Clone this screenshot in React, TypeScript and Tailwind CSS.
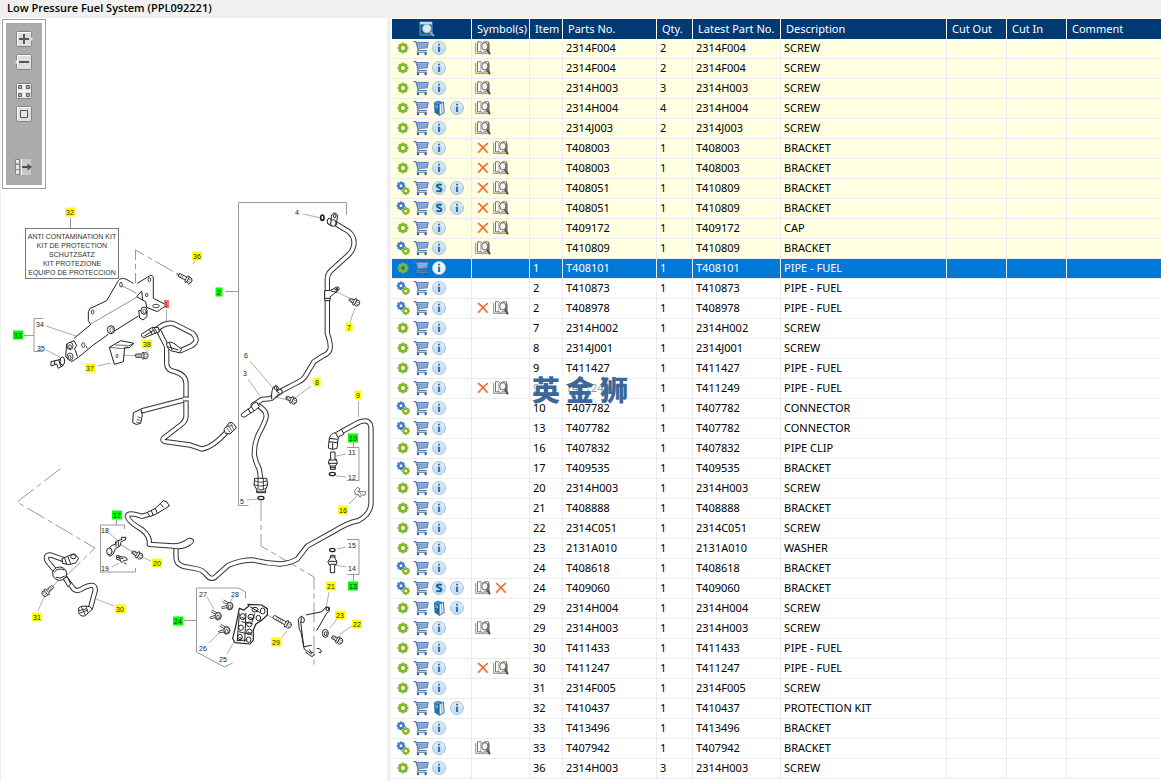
import React from 'react';

type Part = {
  gear: 'one' | 'two';
  extra?: 'S' | 'book';
  symbols: string;
  item: string;
  partNo: string;
  qty: string;
  latest: string;
  description: string;
  selected?: boolean;
};

// gear | extra | symbols (x = cross, b = book) | item | part no. | qty | latest | description
const source = `1||b||2314F004|2|2314F004|SCREW
1||b||2314F004|2|2314F004|SCREW
1||b||2314H003|3|2314H003|SCREW
1|book|b||2314H004|4|2314H004|SCREW
1||b||2314J003|2|2314J003|SCREW
1||xb||T408003|1|T408003|BRACKET
1||xb||T408003|1|T408003|BRACKET
2|S|xb||T408051|1|T410809|BRACKET
2|S|xb||T408051|1|T410809|BRACKET
1||xb||T409172|1|T409172|CAP
2||b||T410809|1|T410809|BRACKET
1|||1|T408101|1|T408101|PIPE - FUEL
2|||2|T410873|1|T410873|PIPE - FUEL
2||xb|2|T408978|1|T408978|PIPE - FUEL
1|||7|2314H002|1|2314H002|SCREW
1|||8|2314J001|1|2314J001|SCREW
1|||9|T411427|1|T411427|PIPE - FUEL
1||xb|9|T411249|1|T411249|PIPE - FUEL
2|||10|T407782|1|T407782|CONNECTOR
2|||13|T407782|1|T407782|CONNECTOR
1|||16|T407832|1|T407832|PIPE CLIP
2|||17|T409535|1|T409535|BRACKET
1|||20|2314H003|1|2314H003|SCREW
1|||21|T408888|1|T408888|BRACKET
1|||22|2314C051|1|2314C051|SCREW
1|||23|2131A010|1|2131A010|WASHER
2|||24|T408618|1|T408618|BRACKET
2|S|bx|24|T409060|1|T409060|BRACKET
1|book||29|2314H004|1|2314H004|SCREW
1||b|29|2314H003|1|2314H003|SCREW
1|||30|T411433|1|T411433|PIPE - FUEL
1||xb|30|T411247|1|T411247|PIPE - FUEL
1|||31|2314F005|1|2314F005|SCREW
1|book||32|T410437|1|T410437|PROTECTION KIT
2|||33|T413496|1|T413496|BRACKET
2||b|33|T407942|1|T407942|BRACKET
1|||36|2314H003|3|2314H003|SCREW`;

const parts: Part[] = source.split('\n').map((line) => {
  const [gear, extra, symbols, item, partNo, qty, latest, description] = line.split('|');
  return {
    gear: gear === '2' ? 'two' : 'one',
    extra: (extra || undefined) as Part['extra'],
    symbols,
    item,
    partNo,
    qty,
    latest,
    description,
    selected: item === '1',
  };
});

/* ---------- icons ---------- */

const TEETH = [0, 45, 90, 135];

function Cog({ cx, cy, r, color }: { cx: number; cy: number; r: number; color: string }) {
  return (
    <g>
      {TEETH.map((a) => (
        <rect
          key={a}
          x={cx - r * 0.26}
          y={cy - r}
          width={r * 0.52}
          height={r * 2}
          fill={color}
          transform={`rotate(${a} ${cx} ${cy})`}
        />
      ))}
      <circle cx={cx} cy={cy} r={r * 0.55} fill="none" stroke={color} strokeWidth={r * 0.42} />
    </g>
  );
}

function GearIcon({ kind, selected }: { kind: 'one' | 'two'; selected?: boolean }) {
  const hole = selected ? '#0078d7' : '#fffff4';
  return (
    <svg width="16" height="16" viewBox="0 0 16 16" aria-hidden="true">
      {kind === 'one' ? (
        <>
          <Cog cx={8} cy={8} r={5.4} color="#83b52e" />
          <circle cx="8" cy="8" r="1.9" fill={hole} />
        </>
      ) : (
        <>
          <Cog cx={6} cy={5.8} r={4.3} color="#4079d0" />
          <circle cx="6" cy="5.8" r="1.4" fill={hole} />
          <Cog cx={10.8} cy={11} r={4} color="#8cb52c" />
          <circle cx="10.8" cy="11" r="1.3" fill={hole} />
        </>
      )}
    </svg>
  );
}

function CartIcon() {
  return (
    <svg width="16" height="16" viewBox="0 0 16 16" aria-hidden="true">
      <path d="M.5 1.6h2.3l2.8 9h8.3" fill="none" stroke="#55789f" strokeWidth="1.2" />
      <path d="M3.6 2.5h11.7l-1.1 5.3-9 .7z" fill="#b4cdec" stroke="#5680b5" strokeWidth="1" />
      <path
        d="M4 4.3h11M4.6 6.2h10M6 2.5l.8 5.8M8 2.5l.4 5.6M10 2.5v5.5M12 2.5l-.3 5.3M13.8 2.5l-.7 5.2"
        stroke="#5f8bc4"
        strokeWidth=".6"
      />
      <path d="M5.4 8.5 4 12.4h10" fill="none" stroke="#6d88a8" strokeWidth="1" />
      <circle cx="5" cy="14" r="1.2" fill="#2d5c94" />
      <circle cx="12.6" cy="14" r="1.2" fill="#2d5c94" />
    </svg>
  );
}

function InfoIcon({ selected }: { selected?: boolean }) {
  return (
    <svg width="16" height="16" viewBox="0 0 16 16" aria-hidden="true">
      <circle cx="8" cy="8" r="6.6" fill={selected ? '#e9f2fa' : '#c9dff0'} stroke="#9fbfdd" strokeWidth=".8" />
      <path d="M2.4 7a5.7 5.7 0 0 1 11.2 0z" fill="#fff" opacity=".35" />
      <path d="M7 3.8h2.1v1.7H7zM6.7 6.7h2.4v5.2H7V7.6h-.3z" fill="#3b6fa8" />
    </svg>
  );
}

function SuperIcon() {
  return (
    <svg width="16" height="16" viewBox="0 0 16 16" aria-hidden="true">
      <circle cx="8" cy="8" r="6.6" fill="#c4e0f2" stroke="#a4c6e0" strokeWidth=".8" />
      <path
        d="M10.6 5.3C9.6 4.3 6 4 5.9 6c0 2 4.5 1.6 4.5 3.8 0 2-3.6 1.8-5 .7"
        fill="none"
        stroke="#14649b"
        strokeWidth="2"
      />
    </svg>
  );
}

function ManualIcon() {
  return (
    <svg width="16" height="16" viewBox="0 0 16 16" aria-hidden="true">
      <path d="M3 2.2 8.2 4.2v11.4L3.6 12.8z" fill="#1a6fae" />
      <path d="M3 2.2 7 .5l5.4 1.7-4.2 2z" fill="#3c8fc8" />
      <path d="M8.2 4.2 12.4 2.2l.8 10.4-5 3z" fill="#eef5fa" stroke="#1d6196" strokeWidth=".9" />
      <path d="M4.200 5.200l2.800 1.100M4.300 6.800l2.700 1.100" stroke="#a9d2ec" strokeWidth=".8" />
      <path d="M10.400 3.500l.6 10.200" stroke="#4d8bb8" strokeWidth=".7" />
    </svg>
  );
}

function CrossIcon() {
  return (
    <svg width="16" height="16" viewBox="0 0 16 16" role="img" aria-label="Not available">
      <path d="M3.2 3.2c3 2.4 6.5 6 9.4 9.6M12.8 3.2C9.5 5.8 6 9.3 3.2 12.8" stroke="#f26a2c" strokeWidth="1.7" fill="none" />
    </svg>
  );
}

function BookIcon() {
  return (
    <svg width="16" height="16" viewBox="0 0 16 16" role="img" aria-label="Notes">
      <path d="M2.500 1.800h3.300L7.500 3.400 9.200 1.800h4.300v10H9l-1.500 1-1.500-1H2.500z" fill="#fffef8" stroke="#66645c" strokeWidth=".9" />
      <path d="M.7 3v10.400h6l.8.800.8-.8h6V3.500" fill="none" stroke="#85837a" strokeWidth=".9" />
      <path d="M5.800 3v9" stroke="#85837a" strokeWidth=".7" />
      <ellipse cx="9.800" cy="6.300" rx="3.100" ry="3.700" fill="#f4f4f1" stroke="#4f4f4c" strokeWidth=".9" />
      <path d="m11.600 9.300 3.500 5" stroke="#4f4d49" strokeWidth="1.800" />
    </svg>
  );
}

function HeaderSearchIcon() {
  return (
    <svg width="16" height="16" viewBox="0 0 16 16" role="img" aria-label="Actions">
      <path d="M1 1h12v13H1z" fill="#17538b" stroke="#5fa3cf" strokeWidth="1" />
      <path d="M1 1h12v2.4H1z" fill="#b9dcf0" />
      <circle cx="7.8" cy="7.6" r="4.3" fill="#dbe7ee" stroke="#a3b5c2" strokeWidth="1" />
      <path d="m11 11 4 4" stroke="#8fa9bb" strokeWidth="2" />
    </svg>
  );
}

/* ---------- viewer toolbar ---------- */

function Key({ children }: { children?: React.ReactNode }) {
  return (
    <svg width="18" height="16" viewBox="0 0 18 16" aria-hidden="true">
      <rect x="1.5" y=".5" width="15" height="15" rx="1" fill="#dedede" stroke="#858585" />
      <path d="M2.5 14V1.5h13" fill="none" stroke="#fff" />
      {children}
    </svg>
  );
}

const tools = [
  {
    label: 'Zoom in',
    gap: 'mt-2',
    icon: (
      <Key>
        <path d="M16 6l2 2-2 2z" fill="#e6e6e6" />
        <path d="M9 3v10M4 8h10" stroke="#555" strokeWidth="2" />
      </Key>
    ),
  },
  {
    label: 'Zoom out',
    gap: 'mt-[7px]',
    icon: (
      <Key>
        <path d="M2 6 0 8l2 2z" fill="#e6e6e6" />
        <path d="M4 8h10" stroke="#555" strokeWidth="2" />
      </Key>
    ),
  },
  {
    label: 'Fit to window',
    gap: 'mt-[13px]',
    icon: (
      <Key>
        <path d="M9 1v14M2 8h14" stroke="#f4f4f4" strokeWidth="2" />
        <path d="M3.5 2.5h3v3h-3zM11.5 2.5h3v3h-3zM3.5 10.5h3v3h-3zM11.5 10.5h3v3h-3z" fill="#aaa" stroke="#666" />
      </Key>
    ),
  },
  {
    label: 'Actual size',
    gap: 'mt-[7px]',
    icon: (
      <Key>
        <path d="M5.5 4.5h7v7h-7z" fill="#e4e4e4" stroke="#555" />
      </Key>
    ),
  },
  {
    label: 'Hide parts list',
    gap: 'mt-[37px]',
    icon: (
      <svg width="18" height="16" viewBox="0 0 18 16" aria-hidden="true">
        <path d="M6 0h10v16H6z" fill="#c9c9c9" />
        <path d="M6.5 0v16" stroke="#fff" />
        <path d="M.5.500h4v4.500h-4zM.5 5.500h4v5h-4zM.5 10.500h4v5h-4z" fill="#e8e8e8" stroke="#858585" />
        <path d="M7 8h7" stroke="#505050" strokeWidth="2" />
        <path d="m12.5 4.5 4.5 3.5-4.5 3.5z" fill="#505050" />
      </svg>
    ),
  },
];

function Toolbar() {
  return (
    <div className="m-px w-[44px] self-start border border-[#a0a0a0] bg-white p-[3px]">
      <div className="flex h-[162px] flex-col items-center bg-[#ababab]" role="toolbar" aria-label="Drawing tools">
        {tools.map((tool) => (
          <button key={tool.label} type="button" aria-label={tool.label} className={`${tool.gap} block h-4 shrink-0`}>
            {tool.icon}
          </button>
        ))}
      </div>
    </div>
  );
}

/* ---------- exploded drawing ---------- */

type Callout = [number, number, string];

const yellow: Callout[] = [
  [70, 212, '32'], [197, 256, '36'], [147, 344, '38'], [90, 368, '37'], [349, 327, '7'],
  [317, 382, '8'], [358, 395, '9'], [343, 510, '16'], [157, 563, '20'], [120, 609, '30'],
  [37, 617, '31'], [331, 586, '21'], [340, 615, '23'], [357, 624, '22'], [276, 642, '29'],
];
const green: Callout[] = [
  [18, 335, '33'], [219, 292, '2'], [353, 438, '10'], [117, 515, '17'], [178, 621, '24'], [353, 586, '13'],
];
const plain: Callout[] = [
  [40, 324, '34'], [41, 348, '35'], [297, 212, '4'], [246, 355, '6'], [245, 373, '3'], [242, 501, '5'],
  [352, 452, '11'], [352, 477, '12'], [352, 545, '15'], [352, 568, '14'], [105, 530, '18'],
  [105, 568, '19'], [203, 594, '27'], [235, 594, '28'], [203, 648, '26'], [223, 659, '25'],
];

function Callouts({ list, fill }: { list: Callout[]; fill?: string }) {
  return (
    <>
      {list.map(([x, y, label]) => {
        const w = label.length > 1 ? 10 : 7;
        return (
          <g key={label}>
            {fill && <rect x={x - w / 2} y={y - 4.5} width={w} height={9} fill={fill} />}
            <text x={x} y={y + 3} textAnchor="middle">
              {label}
            </text>
          </g>
        );
      })}
    </>
  );
}

function Pipe({ d }: { d: string }) {
  return (
    <>
      <path d={d} fill="none" stroke="#333" strokeWidth="16" strokeLinecap="round" strokeLinejoin="round" />
      <path d={d} fill="none" stroke="#fff" strokeWidth="10" strokeLinecap="round" strokeLinejoin="round" />
    </>
  );
}

function Bolt({ x, y, length, angle }: { x: number; y: number; length: number; angle: number }) {
  return (
    <g transform={`translate(${x} ${y}) rotate(${angle})`} fill="#fff" stroke="#222" strokeWidth="2.5">
      <rect x={-length} y="-5" width={length} height="10" rx="3" />
      <path d={length > 30 ? 'M-30-5v10M-24-5v10M-18-5v10M-36-5v10' : 'M-22-5v10M-17-5v10M-12-5v10'} strokeWidth="1.5" />
      <ellipse cx="-3" cy="0" rx="4" ry="11" />
      <path d="M0-8 7-9 12-4v8l-5 6-7-2z" />
      <path d="M2-3h9M2 4h9" strokeWidth="1.5" />
    </g>
  );
}

function Clip({ x, y }: { x: number; y: number }) {
  return (
    <g transform={`translate(${x} ${y})`} fill="#fff" stroke="#333" strokeWidth="2.5">
      <path d="M-22 4-4-2M-20 8l16-3M-14-18 4-8M-17-13 0-3" />
      <ellipse cx="5" cy="0" rx="9" ry="11" />
      <ellipse cx="4" cy="3" rx="4" ry="6" />
      <path d="M-4-6C4-14 12-8 13 2l-6 9M-6 6l9 7" fill="none" />
    </g>
  );
}

const kitLines = ['ANTI CONTAMINATION KIT', 'KIT DE PROTECTION', 'SCHUTZSATZ', 'KIT PROTEZIONE', 'EQUIPO DE PROTECCION'];

function Drawing() {
  return (
    <svg
      width="386"
      height="763"
      viewBox="1 18 386 763"
      className="block font-['Liberation_Sans',sans-serif] text-[7px]"
      role="img"
      aria-label="Low pressure fuel system exploded drawing"
    >
      {/* frames, leaders and centre lines */}
      <g fill="none" stroke="#999" strokeWidth="1">
        <path d="M346.500 214.500v-12h-108v303h10M225 291.500h13M70.500 218v10M24 335.500h10M43 318.500h-9v33h9" />
        <path d="M347 447.500h12v33h-12M353.500 443v4M347 539.500h12v35h-12M353.500 575v6" />
        <path d="M124.500 529v-4h-24v47h35v-4M116.500 520v5M184 620.500h12M245.500 598v-6l-7-4h-42v64l28 15 8-4" />
        <path
          d="M303 214l18 4M202 252l-9 12M46 326l30 10M46 350l14 7M97 366l14-3M147 355v-6M166.500 310v12M337 292l16 8M350 322l5-14M250 361l23 27M248 379l12 17M311 386l-16 12M358.500 401v16M247 500l10-1M346 454l-10 2M346 477l-10-1M346 547l-9 2M346 567l-10-2M349 504l9-9M151 561l-12-5M109 533l8 7M112 567l7-4M114 606l-18-7M38 611l7-16M45 595l13-14M207 597l7 12M233 597l-5 9M209 643l11-11M227 654l7-12M282 637l5-6M329 592l-3 17M337 619l-7 9M352 626l-12 8M121 355.500h14M272 396l19 5"
          strokeWidth=".8"
        />
        <path d="M135.500 293v-43l42 24M60 469l-43 33 78 46-32 31" strokeDasharray="20 4 5 4" />
        <path d="M261 501v45l53 31v90M263 613l14 7M118 543l18 11" strokeDasharray="20 4 5 4" />
      </g>

      {/* contamination kit note */}
      <rect x="25.5" y="228.5" width="93" height="50" fill="#fff" stroke="#777" />
      <g fill="#333">
        {kitLines.map((line, i) => (
          <text key={line} x={72} y={239 + i * 9} textAnchor="middle">
            {line}
          </text>
        ))}
      </g>

      {/* mounting bracket */}
      <g transform="translate(0 190) scale(.33333)" fill="#fff" stroke="#222" strokeWidth="3" strokeLinejoin="round">
        <path
          d="M222 445 272 404 265 392V365Q268 352 282 350L320 332 355 272Q362 262 377 267L400 280 412 280 450 257Q459 254 460 264L461 325 502 347 472 365 440 352 437 370 345 422 280 465 235 502 215 515 197 500 200 460Z"
          stroke="none"
        />
        <path d="M222 445 272 404 265 392V365Q268 352 282 350L320 332 355 272Q362 262 377 267L400 280M412 280 450 257Q459 254 460 264V325L500 345 472 365 440 352 437 335 410 320 425 303 428 330" fill="none" />
        <path d="M440 368 420 376M415 378 345 422M325 433 280 465 235 502 215 515 197 500 200 462 222 452 230 466 222 480M226 480 232 500" fill="none" />
        <path d="M272 402 410 322M362 285 410 310" strokeWidth="1.5" />
        <path d="M416 362h25v18l-12 10-10-6z" />
        <ellipse cx="432" cy="362" rx="9" ry="11" /><ellipse cx="433" cy="364" rx="4" ry="6" strokeWidth="2" />
        <ellipse cx="333" cy="419" rx="11" ry="12" /><ellipse cx="335" cy="420" rx="5" ry="8" strokeWidth="2" />
        <g strokeWidth="2.500">
          <ellipse cx="363" cy="284" rx="4" ry="7" /><ellipse cx="448" cy="269" rx="4" ry="6" />
          <ellipse cx="278" cy="366" rx="4" ry="6" /><ellipse cx="440" cy="315" rx="4" ry="5" />
          <ellipse cx="468" cy="348" rx="10" ry="5" /><ellipse cx="250" cy="465" rx="5" ry="7" />
          <path d="m258 468 4 8" />
          <ellipse cx="210" cy="468" rx="9" ry="11" /><ellipse cx="210" cy="470" rx="4" ry="6" />
          <ellipse cx="210" cy="500" rx="9" ry="11" /><ellipse cx="209" cy="502" rx="4" ry="6" />
        </g>
        {/* clip 35 */}
        <path d="M153 515 183 508 190 526 175 535 170 522 153 528zM164 512v13M176 509l6 20" />
        <ellipse cx="187" cy="513" rx="7" ry="12" />
        {/* angle bracket 37 */}
        <path d="M328 472 362 452 402 460 388 473 374 474 370 515 343 523z" />
        <path d="M328 472 368 476 402 460M345 465 382 466" fill="none" strokeWidth="2" />
        <ellipse cx="351" cy="498" rx="3" ry="5" strokeWidth="2" />
        <Bolt x={432} y={497} length={26} angle={0} />
        <Bolt x={564} y={269} length={32} angle={28} />
      </g>

      {/* pipe 1 */}
      <g transform="translate(100 300) scale(.33333)" fill="#fff" stroke="#222" strokeWidth="3">
        <Pipe d="M258 298 128 332" />
        <Pipe d="M175 90 200 140V190Q200 212 225 215 258 225 258 250V350Q256 364 246 372L190 415Q186 423 196 425L270 435 305 447Q340 442 385 390" />
        <Pipe d="M168 90Q200 62 225 73L278 100Q300 122 275 137L242 152 215 142" />
        <path d="M250 290h17v16h-17z" stroke="none" />
        <path d="M249 291h18M249 303h18" />
        <path d="M124 103 155 83 175 82 178 96 160 102 133 113Q124 112 124 103zM148 88l8 14M156 84l10 16M133 108l30-18M163 84l8 14" />
        <path d="M199 130Q210 122 222 130L245 148 238 158 212 152Q200 146 199 130zM208 128l8 22M203 140l32 10" />
        <path d="M100 338 122 328 127 345 122 370Q108 378 98 368z" />
        <path d="M112 350l11 4M110 358l12 4M108 366l12 3" strokeWidth="2" />
        <path d="M372 388 388 368Q400 364 409 384L390 402 376 400z" />
        <path d="M384 374l14 22M392 370l10 20M379 382l12 16M380 380l18-4" strokeWidth="2" />
      </g>

      {/* pipe 2 and fittings */}
      <g transform="translate(190 190) scale(.33333)" fill="#fff" stroke="#222" strokeWidth="3">
        <Pipe d="M432 98 475 124Q493 138 492 160 491 180 475 195L422 243Q412 253 412 268V430Q425 468 419 481 414 492 398 498L372 515 345 560Q338 570 325 576L275 602 250 618" />
        <path d="M404 302Q420 305 440 292L446 300 421 320 420 332H404z" />
        <path d="M404 325h16M423 303l18 4" />
        <ellipse cx="441" cy="296" rx="7" ry="5" /><ellipse cx="441" cy="297" rx="3" ry="2" />
        <path d="M424 88Q422 69 435 69 446 72 441 88L439 105 424 108 412 100 413 88z" />
        <ellipse cx="434" cy="78" rx="4" ry="5" />
        <ellipse cx="418" cy="94" rx="6" ry="9" /><ellipse cx="430" cy="99" rx="8" ry="10" />
        <ellipse cx="397" cy="83" rx="5" ry="8" strokeWidth="5" />
        <Bolt x={497} y={337} length={18} angle={25} />
      </g>

      <g transform="translate(200 370) scale(.33333)" fill="#fff" stroke="#222" strokeWidth="3">
        {/* pipe 9 */}
        <Pipe d="M430 182 476 157Q513 142 513 178V402Q510 434 475 452 440 459 400 485L322 528 292 567Q270 580 240 582 200 580 160 570 120 570 85 586L50 617Q35 634 20 615 8 600-8 597L-50 589Q-72 583-72 562V540" />
        <Pipe d="M-150 432-175 439Q-215 425-218 438-216 455-175 478-148 500-152 523L-80 528Q-54 528-32 511-20 512-32 519-52 534-80 528" />
        <path d="M-158 427-134 415-110 392Q-98 391-92 408L-128 430-150 440zM-146 422l6 15M-134 415l6 15M-118 402l8 10" />
        <path d="M388 205Q392 190 407 188L424 178 432 192 415 201 411 235Q398 242 385 234zM406 188l8 14M388 205l24 3M386 215l25 3M398 218v20" />
        {/* pipe 3 */}
        <Pipe d="M170 105Q202 120 198 142 196 155 176 192 162 220 163 255 166 275 178 298L182 328" />
        <Pipe d="M240 65 212 86 186 88 160 105" />
        <path d="M124 132 152 112 160 100 170 96 178 110 166 120 134 141Q122 142 124 132zM144 116l8 13M152 108l10 14" />
        <path d="M215 88Q213 55 225 47 235 46 236 56L228 62 238 70 216 92" />
        <ellipse cx="227" cy="54" rx="4" ry="5" />
        <Bolt x={278} y={91} length={20} angle={25} />
        <path d="M164 325H200L203 345 197 358V368H170V358L162 345z" />
        <path d="M164 333q18 8 37 0M163 344q19 9 39 0M170 356q14 7 27 0M174 325v30M190 325v34M170 364h27" strokeWidth="2.500" />
        <ellipse cx="183" cy="384" rx="9" ry="5" strokeWidth="4" />
        {/* connectors 10 and 13 */}
        <path d="M392 246h13v22h4l3 12-6 8v10h-15v-10l-6-8 3-12h4zM388 270h21M386 280h25M391 288h14M391 293h14" />
        <ellipse cx="397" cy="312" rx="9" ry="5" strokeWidth="4" />
        <ellipse cx="397" cy="540" rx="8" ry="5" strokeWidth="4" />
        <path d="M392 556h13v10l6 8-3 10-4 2v22h-13v-22l-4-2-3-10 6-8zM391 561h14M387 574h23M389 583h20" />
        <path d="M464 362 472 352 480 356 476 364 498 366 494 376 484 374 480 382 474 372 466 374zM472 362l12 10" stroke="#777" />
      </g>

      {/* lower left pipe 30 and bracket 17 */}
      <g transform="translate(0 480) scale(.33333)" fill="#fff" stroke="#222" strokeWidth="3">
        <Pipe d="M200 242 152 225Q132 224 143 245L170 278" />
        <Pipe d="M192 290 222 328Q235 336 248 325 285 305 286 330L272 382" />
        <path d="M186 236 222 221 236 234 228 248 208 254 188 250zM194 235l6 18M204 230l8 22" />
        <ellipse cx="220" cy="230" rx="8" ry="6" />
        <ellipse cx="179" cy="281" rx="21" ry="20" />
        <path d="M163 276q12-14 30-6M168 292q14 6 26-4M190 296l14 24 8-8-10-22z" />
        <path d="M236 384Q246 375 270 380L277 388 254 408Q240 410 236 398z" />
        <path d="M244 380l12 26M236 392l24-6M238 400l26-10M258 378l6 20" strokeWidth="2.500" />
        <Bolt x={138} y={338} length={28} angle={138} />
        <path d="M322 222Q326 196 345 193L348 184 366 178 364 172 378 172 376 180 364 184 360 198 346 206 340 222 330 229zM322 210l16 6M348 186v14M355 184v14" />
        <ellipse cx="328" cy="214" rx="8" ry="10" />
        <path d="M350 226l14 4 14 2 4 8-12 2-4 6-8-8-8-2zM350 232l20 4M356 226l6 18M372 248l8 4" stroke="#333" />
        <Bolt x={416} y={226} length={20} angle={28} />
      </g>

      {/* bracket 24, bolts and plate 21 */}
      <g transform="translate(180 500) scale(.33333)" fill="#fff" stroke="#222" strokeWidth="3">
        <path
          d="M178 325 192 330 206 318 204 313 245 315 262 326V345L246 360 228 372 220 390V420L210 432 165 428 158 415 168 375z"
          strokeWidth="3.500"
        />
        <g strokeWidth="3">
          <ellipse cx="225" cy="329" rx="9" ry="7" /><ellipse cx="248" cy="333" rx="7" ry="9" />
          <ellipse cx="188" cy="350" rx="8" ry="9" /><ellipse cx="213" cy="351" rx="9" ry="8" />
          <ellipse cx="235" cy="354" rx="7" ry="8" /><ellipse cx="183" cy="383" rx="7" ry="8" />
          <ellipse cx="208" cy="373" rx="8" ry="7" /><ellipse cx="208" cy="395" rx="8" ry="8" />
          <ellipse cx="180" cy="411" rx="7" ry="8" /><ellipse cx="206" cy="419" rx="7" ry="8" />
          <path d="M178 340 172 420M198 338 194 426M224 340 216 366M184 365l34 6M176 395l40 10M170 422l32-2M210 320l30 18M184 352l10 4M208 352l12 4M204 396l10 4M178 412l8 4" fill="none" />
        </g>
        <Clip x={145} y={318} />
        <Clip x={110} y={348} />
        <Clip x={136} y={391} />
        <Bolt x={322} y={373} length={48} angle={29} />
        <g fill="none">
          <path d="M355 358Q358 350 368 348M378 345 426 335 438 321 448 322 448 333 440 340 410 392M355 358 358 390 362 392 373 448 396 462M362 364 371 440 395 436M376 456 396 470 404 464M388 448q4 12 12 10M410 445q10-2 14 8 2 6-8 4" />
          <ellipse cx="368" cy="360" rx="5" ry="8" />
          <ellipse cx="442" cy="327" rx="4" ry="5" />
        </g>
        <ellipse cx="436" cy="400" rx="9" ry="12" />
        <ellipse cx="437" cy="401" rx="4" ry="6" />
        <Bolt x={476} y={421} length={22} angle={28} />
      </g>

      <g fill="#222">
        <Callouts list={yellow} fill="#ffff00" />
        <Callouts list={green} fill="#00ff00" />
        <Callouts list={plain} />
      </g>
      <rect x="164" y="300" width="5" height="8" fill="#f87171" />
      <text x="166" y="307" textAnchor="middle" fill="#7f1d1d">1</text>
    </svg>
  );
}

/* ---------- parts table ---------- */

const headings = ['Symbol(s)', 'Item', 'Parts No.', 'Qty.', 'Latest Part No.', 'Description', 'Cut Out', 'Cut In', 'Comment'];

const slot = 'flex h-4 w-[18px] items-center justify-center';

function PartRow({ part, pale }: { part: Part; pale: boolean }) {
  const tone = part.selected ? 'bg-[#0078d7] text-white' : pale ? 'bg-[#ffffe1]' : 'bg-white';
  const cell = 'border-r border-b border-[#ececf0] pt-px pl-[3px] align-top';
  const iconCell = 'border-r border-b border-[#ececf0] pt-px pl-0.5 align-top';
  return (
    <tr className={`h-5 ${tone}`} aria-selected={part.selected}>
      <td className={iconCell}>
        <div className="flex">
          <button type="button" aria-label="Part options" className={slot}>
            <GearIcon kind={part.gear} selected={part.selected} />
          </button>
          <button type="button" aria-label="Add to cart" className={slot}>
            <CartIcon />
          </button>
          {part.extra === 'S' && (
            <button type="button" aria-label="Supersession" className={slot}>
              <SuperIcon />
            </button>
          )}
          {part.extra === 'book' && (
            <button type="button" aria-label="Manual" className={slot}>
              <ManualIcon />
            </button>
          )}
          <button type="button" aria-label="Information" className={slot}>
            <InfoIcon selected={part.selected} />
          </button>
        </div>
      </td>
      <td className={iconCell}>
        <div className="flex">
          {part.symbols.split('').map((s) => (
            <span key={s} className={slot}>
              {s === 'x' ? <CrossIcon /> : <BookIcon />}
            </span>
          ))}
        </div>
      </td>
      <td className={cell}>{part.item}</td>
      <td className={cell}>{part.partNo}</td>
      <td className={cell}>{part.qty}</td>
      <td className={cell}>{part.latest}</td>
      <td className={cell}>{part.description}</td>
      <td className={cell} />
      <td className={cell} />
      <td className="border-b border-[#ececf0]" />
    </tr>
  );
}

function PartsTable() {
  const firstItem = parts.findIndex((p) => p.item !== '');
  return (
    <table className="w-full table-fixed border-separate border-spacing-0 whitespace-nowrap text-[11px] leading-4 text-black">
      <colgroup>
        <col className="w-[80px]" />
        <col className="w-[58px]" />
        <col className="w-[33px]" />
        <col className="w-[94px]" />
        <col className="w-[36px]" />
        <col className="w-[88px]" />
        <col className="w-[166px]" />
        <col className="w-[60px]" />
        <col className="w-[60px]" />
        <col />
      </colgroup>
      <thead>
        <tr className="h-5 bg-[#003a75] text-left text-white">
          <th className="border-r border-white pr-2.5">
            <div className="flex justify-center">
              <HeaderSearchIcon />
            </div>
          </th>
          {headings.map((h) => (
            <th key={h} className="border-r border-white pl-[5px] font-normal last:border-r-0">
              {h}
            </th>
          ))}
        </tr>
      </thead>
      <tbody>
        {parts.map((part, i) => (
          <PartRow key={i} part={part} pale={i < firstItem} />
        ))}
      </tbody>
    </table>
  );
}

export default function App() {
  return (
    <div className="flex h-screen flex-col overflow-hidden bg-[#f0f0f0] font-['Noto_Sans','Open_Sans',sans-serif]">
      <h1 className="h-[18px] shrink-0 pl-[7px] font-['Open_Sans','Noto_Sans',sans-serif] text-[11px] leading-4 font-semibold text-black">
        Low Pressure Fuel System (PPL092221)
      </h1>
      <div className="flex min-h-0 flex-1">
        <section className="relative ml-px w-[386px] shrink-0 overflow-hidden bg-white" aria-label="Drawing">
          <Drawing />
          <div className="absolute top-0 left-0">
            <Toolbar />
          </div>
        </section>
        <section className="relative ml-1 min-w-0 flex-1 overflow-hidden border-t border-l border-white bg-white" aria-label="Parts list">
          <PartsTable />
          <div
            className="pointer-events-none absolute top-[356px] left-[140px] flex gap-1.5 bg-white/60 font-['Noto_Sans_CJK_SC',sans-serif] text-[28px] leading-7 font-black text-[#3d6796]"
            lang="zh"
          >
            <span>英</span>
            <span>金</span>
            <span>狮</span>
          </div>
        </section>
      </div>
    </div>
  );
}
